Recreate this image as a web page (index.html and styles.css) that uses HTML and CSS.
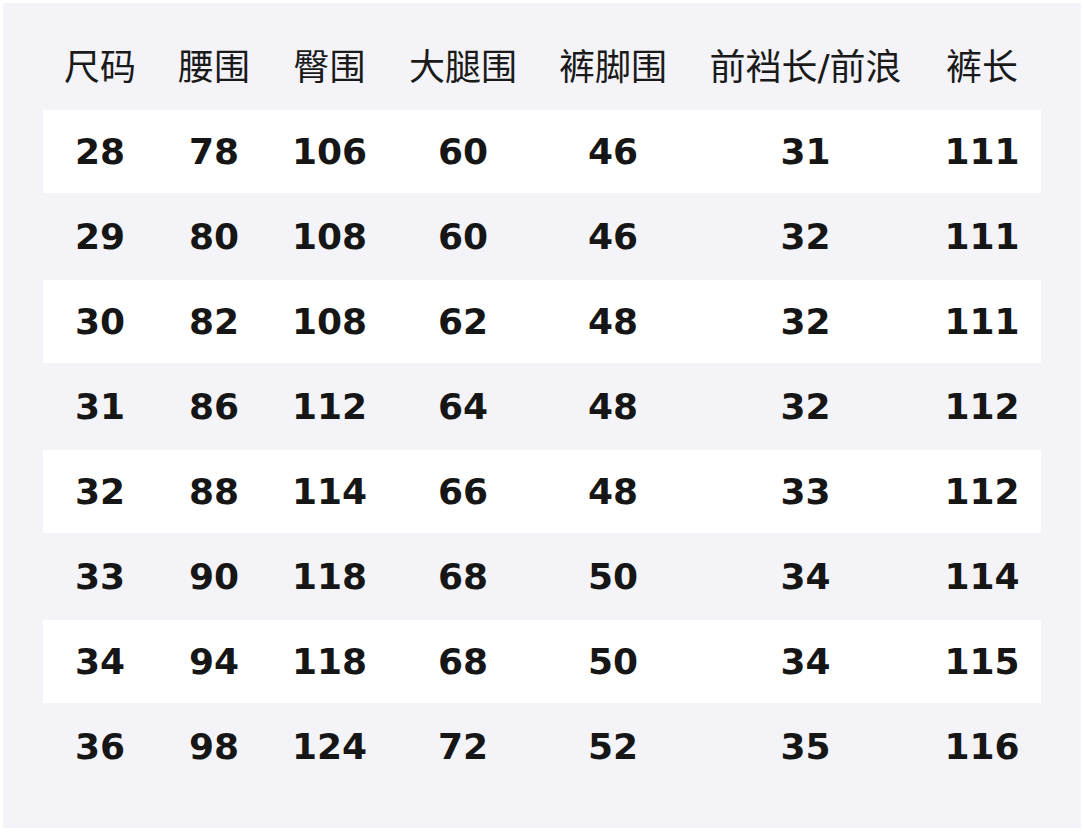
FILE: index.html
```html
<!DOCTYPE html>
<html lang="zh">
<head>
<meta charset="utf-8">
<title>尺码表</title>
<link rel="stylesheet" href="styles.css">
</head>
<body>
<div class="panel">
  <div class="table">
    <div class="row head"><div>尺码</div><div>腰围</div><div>臀围</div><div>大腿围</div><div>裤脚围</div><div>前裆长/前浪</div><div>裤长</div></div>
    <div class="row light"><div>28</div><div>78</div><div>106</div><div>60</div><div>46</div><div>31</div><div>111</div></div>
    <div class="row"><div>29</div><div>80</div><div>108</div><div>60</div><div>46</div><div>32</div><div>111</div></div>
    <div class="row light"><div>30</div><div>82</div><div>108</div><div>62</div><div>48</div><div>32</div><div>111</div></div>
    <div class="row"><div>31</div><div>86</div><div>112</div><div>64</div><div>48</div><div>32</div><div>112</div></div>
    <div class="row light"><div>32</div><div>88</div><div>114</div><div>66</div><div>48</div><div>33</div><div>112</div></div>
    <div class="row"><div>33</div><div>90</div><div>118</div><div>68</div><div>50</div><div>34</div><div>114</div></div>
    <div class="row light"><div>34</div><div>94</div><div>118</div><div>68</div><div>50</div><div>34</div><div>115</div></div>
    <div class="row"><div>36</div><div>98</div><div>124</div><div>72</div><div>52</div><div>35</div><div>116</div></div>
  </div>
</div>
</body>
</html>
```
FILE: styles.css
```css
html, body {
  margin: 0;
  padding: 0;
  background: #ffffff;
}
body {
  width: 1084px;
  height: 833px;
  overflow: hidden;
}
.panel {
  margin: 3px 0 0 3px;
  width: 1078px;
  height: 825px;
  box-sizing: border-box;
  padding: 22px 40px 0 40px;
  background: #f3f3f8;
}
.table {
  display: flex;
  flex-direction: column;
  gap: 2px;
}
.row {
  display: grid;
  grid-template-columns: 114px 114px 117px 150px 150px 235px 118px;
  height: 83px;
  box-sizing: border-box;
  align-items: center;
  text-align: center;
  font-family: "DejaVu Sans", "Noto Sans CJK SC", sans-serif;
  font-size: 36px;
  font-weight: bold;
  color: #161616;
}
.row.head {
  padding-bottom: 6px;
  font-weight: normal;
  color: #1a1a1a;
}
.row.light {
  background: #ffffff;
}
```
